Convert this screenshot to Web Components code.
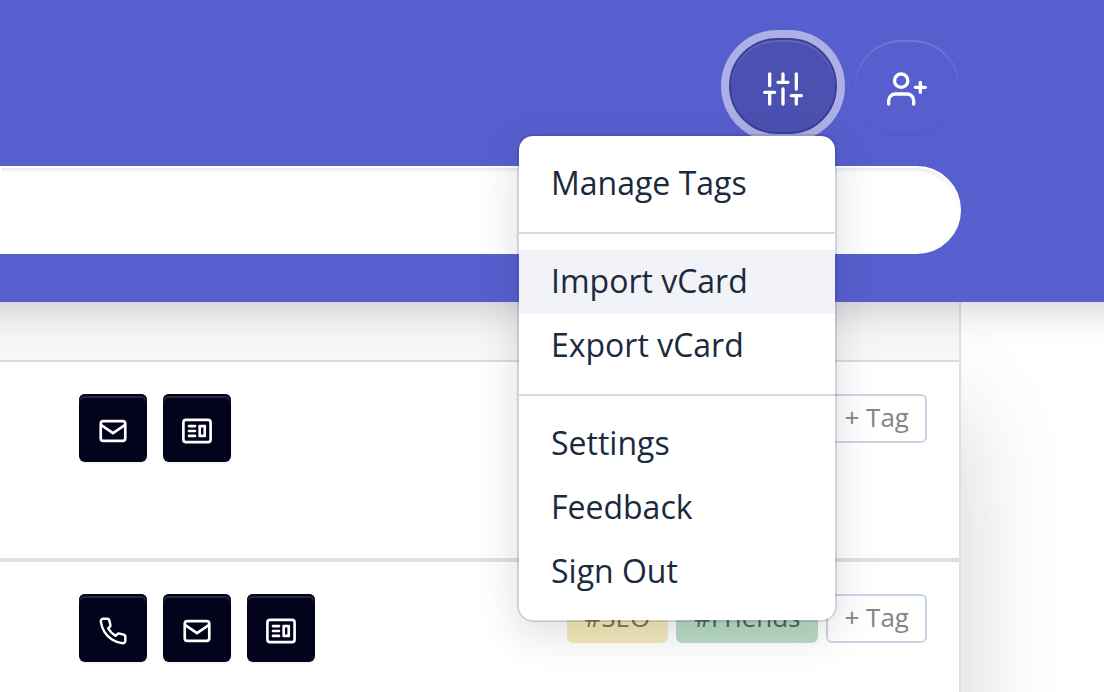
<!DOCTYPE html>
<html lang="en">
<head>
<meta charset="utf-8">
<title>Contacts</title>
<style>
  body { margin: 0; background: #fff; color: #1b2a3d; font-family: "Open Sans", "Noto Sans", sans-serif; }
</style>
</head>
<body>
<contacts-app></contacts-app>
<script>
const ICONS = {
  sliders: '<path d="M4 21v-7M4 10V3M12 21v-9M12 8V3M20 21v-5M20 12V3M1 14h6M9 8h6M17 16h6"/>',
  addUser: '<circle cx="8.5" cy="7" r="4"/><path d="M16 21v-2a4 4 0 0 0-4-4H5a4 4 0 0 0-4 4v2M20 8v6M23 11h-6"/>',
  mail: '<rect x="2.8" y="4.6" width="18.400" height="14.800" rx="2"/><path d="M3.200 7.600l8.800 6l8.800-6"/>',
  card: '<rect x="1.800" y="3.600" width="20.400" height="16.800" rx="2"/><path d="M6 8.300h4.500M6 12h4.500M6 15.700h4.500M14 8.300h3.800v7.400h-3.800z"/>',
  phone: '<path transform="translate(.9 .9) scale(.925)" d="M22 16.920v3a2 2 0 0 1-2.180 2 19.790 19.790 0 0 1-8.630-3.070 19.500 19.500 0 0 1-6-6 19.790 19.790 0 0 1-3.070-8.670A2 2 0 0 1 4.110 2h3a2 2 0 0 1 2 1.720c.13.96.36 1.900.7 2.810a2 2 0 0 1-.45 2.110L8.090 9.910a16 16 0 0 0 6 6l1.270-1.270a2 2 0 0 1 2.110-.45c.91.34 1.850.57 2.810.7A2 2 0 0 1 22 16.920z"/>'
};

class Base extends HTMLElement {
  connectedCallback() {
    if (this.shadowRoot) return;
    this.attachShadow({ mode: 'open' }).innerHTML = this.render();
  }
}

customElements.define('ui-icon', class extends Base {
  render() {
    return `<style>
      :host { display: block; width: 40px; height: 40px; }
      :host([small]) { width: 32px; height: 32px; }
      svg { display: block; width: 100%; height: 100%; overflow: visible; fill: none; stroke: currentColor; stroke-width: 2; stroke-linecap: round; stroke-linejoin: round; }
    </style><svg viewBox="0 0 24 24" aria-hidden="true">${ICONS[this.getAttribute('name')]}</svg>`;
  }
});

customElements.define('round-button', class extends Base {
  render() {
    return `<style>
      :host { display: block; }
      button { box-sizing: border-box; display: grid; place-items: center; width: 108px; height: 96px; margin: 0; padding: 6px 0 0; border: 2px solid transparent; border-radius: 48px; background: transparent; background-clip: padding-box; color: #fff; box-shadow: inset 0 2px 0 rgba(255,255,255,.15), 0 2px 2px rgba(27,31,80,.05); }
      :host([active]) button { border-color: #3b4192; background: #4b51b1; box-shadow: inset 0 2px 0 rgba(255,255,255,.12), 0 0 0 8px #adafe7; }
    </style><button type="button" aria-label="${this.getAttribute('label')}"><slot></slot></button>`;
  }
});

customElements.define('menu-item', class extends Base {
  render() {
    return `<style>
      :host { display: block; }
      button { display: block; width: 100%; height: 64px; margin: 0; padding: 0 32px 2px; border: 0; background: transparent; color: inherit; font: inherit; line-height: 62px; text-align: left; }
      :host([highlighted]) button { background: #f2f3f8; }
    </style><button type="button" role="menuitem"><slot></slot></button>`;
  }
});

customElements.define('menu-group', class extends Base {
  render() {
    return `<style>
      :host { display: block; padding: 16px 0; border-bottom: 2px solid #d9d9df; }
      :host(:last-of-type) { border-bottom: 0; }
    </style><slot></slot>`;
  }
});

customElements.define('drop-menu', class extends Base {
  render() {
    return `<style>
      :host { display: block; box-sizing: border-box; width: 320px; border: 2px solid rgba(27,31,60,.16); border-radius: 16px; background: #fff; background-clip: padding-box; font-size: 32px; box-shadow: 0 12px 40px rgba(27,31,60,.15); }
    </style><div role="menu"><slot></slot></div>`;
  }
});

customElements.define('app-header', class extends Base {
  render() {
    return `<style>
      :host { position: relative; z-index: 1; display: flex; flex-direction: column; gap: 32px; padding: 38px 143px 48px 0; background: #575fcf; box-shadow: 0 -36px 40px 40px rgba(27,31,40,.23); }
      .actions { display: flex; justify-content: flex-end; gap: 16px; }
      .anchor { position: relative; }
      drop-menu { position: absolute; top: 100%; right: 0; z-index: 2; }
      input { box-sizing: border-box; display: block; width: 100%; height: 88px; margin: 0; padding: 0 44px; border: 2px solid #fff; border-radius: 0 44px 44px 0; background: #fff; font: inherit; font-size: 32px; box-shadow: inset 0 4px 4px -2px rgba(0,0,0,.1); }
    </style>
    <div class="actions">
      <div class="anchor">
        <round-button active label="Options"><ui-icon name="sliders"></ui-icon></round-button>
        <drop-menu>
          <menu-group><menu-item>Manage Tags</menu-item></menu-group>
          <menu-group><menu-item highlighted>Import vCard</menu-item><menu-item>Export vCard</menu-item></menu-group>
          <menu-group><menu-item>Settings</menu-item><menu-item>Feedback</menu-item><menu-item>Sign Out</menu-item></menu-group>
        </drop-menu>
      </div>
      <round-button label="Add contact"><ui-icon name="addUser"></ui-icon></round-button>
    </div>
    <input type="search" aria-label="Search contacts">`;
  }
});

customElements.define('icon-button', class extends Base {
  render() {
    return `<style>
      :host { display: block; }
      button { display: grid; place-items: center; width: 68px; height: 68px; margin: 0; padding: 6px 0 0; border: 0; border-radius: 6px; background: #03031c; color: #fff; box-shadow: inset 0 2px 0 #03031c, inset 0 4px 0 rgba(255,255,255,.14), 0 2px 2px rgba(27,31,35,.05); }
    </style><button type="button" aria-label="${this.getAttribute('label')}"><ui-icon small name="${this.getAttribute('icon')}"></ui-icon></button>`;
  }
});

customElements.define('contact-tag', class extends Base {
  render() {
    return `<style>
      :host { display: block; }
      button { box-sizing: border-box; display: block; height: 49px; margin: 0; padding: 0 16px 2px; border: 2px solid transparent; border-radius: 6px; background: transparent; color: #858585; font: inherit; font-size: 26px; line-height: 43px; white-space: nowrap; }
      :host([tone="add"]) button { border-color: #c9d5e4; }
      :host([tone="yellow"]) button { background: #f6eabb; border-color: #f6eabb; color: #7d7346; }
      :host([tone="green"]) button { background: #badcc4; border-color: #badcc4; color: #47684f; }
    </style><button type="button"><slot></slot></button>`;
  }
});

customElements.define('contact-row', class extends Base {
  render() {
    return `<style>
      :host { display: flex; justify-content: space-between; align-items: flex-start; box-sizing: border-box; min-height: 200px; padding: 32px 32px 32px 79px; border-bottom: 4px solid #dfdfe1; }
      .links { display: flex; gap: 16px; }
      .tags { display: flex; gap: 8px; }
    </style>
    <div class="links"><slot name="link"></slot></div>
    <div class="tags"><slot></slot></div>`;
  }
});

customElements.define('contact-list', class extends Base {
  render() {
    return `<style>
      :host { display: block; margin-right: 143px; background: #fff; box-shadow: 0 110px 96px rgba(27,31,50,.2); }
      .head { height: 58px; border-right: 2px solid #dce3ee; background: #f7f7f7; }
      .rows { border-top: 2px solid #dcdcde; border-right: 2px solid #dfdfe1; }
    </style>
    <div class="head"></div><div class="rows"><slot></slot></div>`;
  }
});

customElements.define('contacts-app', class extends Base {
  render() {
    return `<style>:host { display: block; height: 100vh; overflow: hidden; }</style>
    <app-header></app-header>
    <contact-list>
      <contact-row>
        <icon-button slot="link" icon="mail" label="Email"></icon-button>
        <icon-button slot="link" icon="card" label="Contact card"></icon-button>
        <contact-tag tone="add">+ Tag</contact-tag>
      </contact-row>
      <contact-row>
        <icon-button slot="link" icon="phone" label="Call"></icon-button>
        <icon-button slot="link" icon="mail" label="Email"></icon-button>
        <icon-button slot="link" icon="card" label="Contact card"></icon-button>
        <contact-tag tone="yellow">#SEO</contact-tag>
        <contact-tag tone="green">#Friends</contact-tag>
        <contact-tag tone="add">+ Tag</contact-tag>
      </contact-row>
    </contact-list>`;
  }
});
</script>
</body>
</html>
